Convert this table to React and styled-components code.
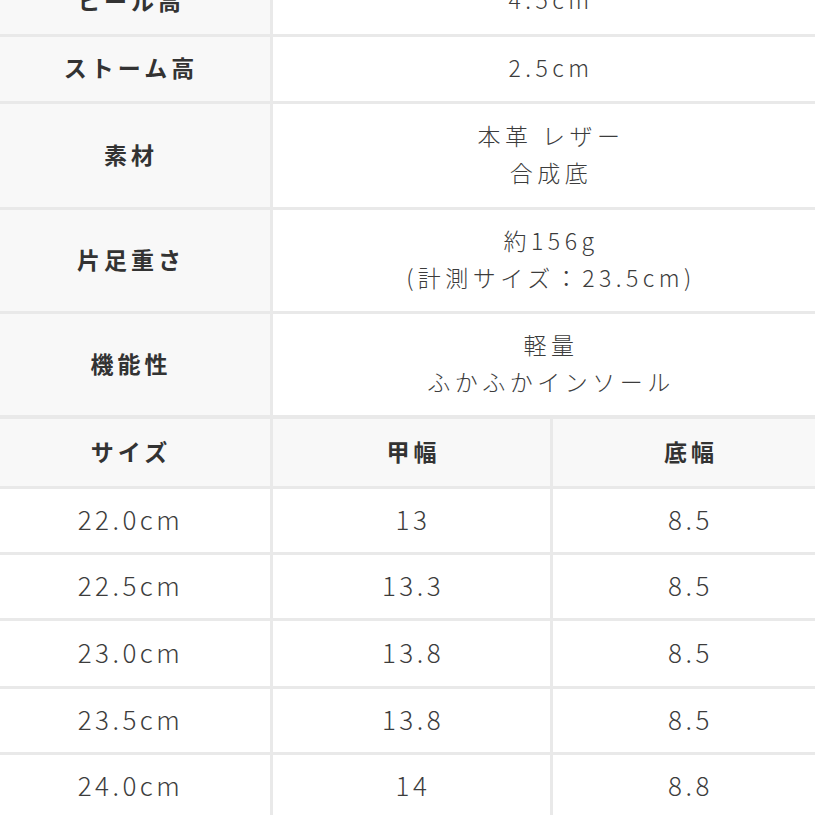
import styled, { createGlobalStyle } from "styled-components";

const GlobalStyle = createGlobalStyle`
    html, body {
        margin: 0;
        padding: 0;
        background: #ffffff;
        overflow: hidden;
    }
    body {
        font-family: "Noto Sans CJK JP", "Noto Sans", sans-serif;
        color: #3a3a3a;
    }
`;

const specs = [
    { label: "ヒール高", lines: ["4.5cm"], height: 65 },
    { label: "ストーム高", lines: ["2.5cm"], height: 64 },
    { label: "素材", lines: ["本革 レザー", "合成底"], height: 103 },
    { label: "片足重さ", lines: ["約156g", "(計測サイズ：23.5cm)"], height: 101 },
    { label: "機能性", lines: ["軽量", "ふかふかインソール"], height: 101 },
];

const sizes = [
    ["22.0cm", "13", "8.5", 63],
    ["22.5cm", "13.3", "8.5", 63],
    ["23.0cm", "13.8", "8.5", 65],
    ["23.5cm", "13.8", "8.5", 63],
    ["24.0cm", "14", "8.8", 63],
];

function App() {
    return (
        <Page>
            <GlobalStyle />
            <SpecTable>
                {specs.map((row) => (
                    <SpecRow key={row.label} $height={row.height}>
                        <LabelCell>{row.label}</LabelCell>
                        <ValueCell>
                            {row.lines.map((line) => (
                                <Line key={line}>{line}</Line>
                            ))}
                        </ValueCell>
                    </SpecRow>
                ))}
            </SpecTable>
            <SizeTable>
                <SizeRow $height={67}>
                    <LabelCell>サイズ</LabelCell>
                    <LabelCell>甲幅</LabelCell>
                    <LabelCell>底幅</LabelCell>
                </SizeRow>
                {sizes.map(([size, instep, sole, h]) => (
                    <SizeRow key={size} $height={h}>
                        <NumCell>{size}</NumCell>
                        <NumCell>{instep}</NumCell>
                        <NumCell>{sole}</NumCell>
                    </SizeRow>
                ))}
            </SizeTable>
        </Page>
    );
}

export default App;

const Page = styled.div`
    width: 837px;
    margin-left: -12px;
    margin-top: -31px;
    background: #e9e9e9;
    display: flex;
    flex-direction: column;
    gap: 4px;
`;

const SpecTable = styled.div`
    display: flex;
    flex-direction: column;
    gap: 3px;
`;

const SpecRow = styled.div`
    display: grid;
    grid-template-columns: 282px 1fr;
    gap: 3px;
    height: ${(p) => p.$height}px;
`;

const SizeTable = styled.div`
    display: flex;
    flex-direction: column;
    gap: 3px;
`;

const SizeRow = styled.div`
    display: grid;
    grid-template-columns: 282px 277px 1fr;
    gap: 3px;
    height: ${(p) => p.$height}px;
`;

const Cell = styled.div`
    display: flex;
    flex-direction: column;
    align-items: center;
    justify-content: center;
    text-align: center;
    padding-bottom: 4px;
    box-sizing: border-box;
`;

const LabelCell = styled(Cell)`
    background: #f8f8f8;
    font-size: 23px;
    font-weight: 700;
    color: #333333;
    letter-spacing: 4px;
    padding-left: 4px;
`;

const ValueCell = styled(Cell)`
    background: #ffffff;
    font-size: 23px;
    font-weight: 300;
    color: #3c3c3c;
    letter-spacing: 4.5px;
    padding-left: 4px;
`;

const Line = styled.div`
    line-height: 37px;
    white-space: nowrap;
`;

const NumCell = styled(Cell)`
    background: #ffffff;
    font-size: 26px;
    font-weight: 300;
    color: #3c3c3c;
    letter-spacing: 3.5px;
    padding-left: 3px;
`;
